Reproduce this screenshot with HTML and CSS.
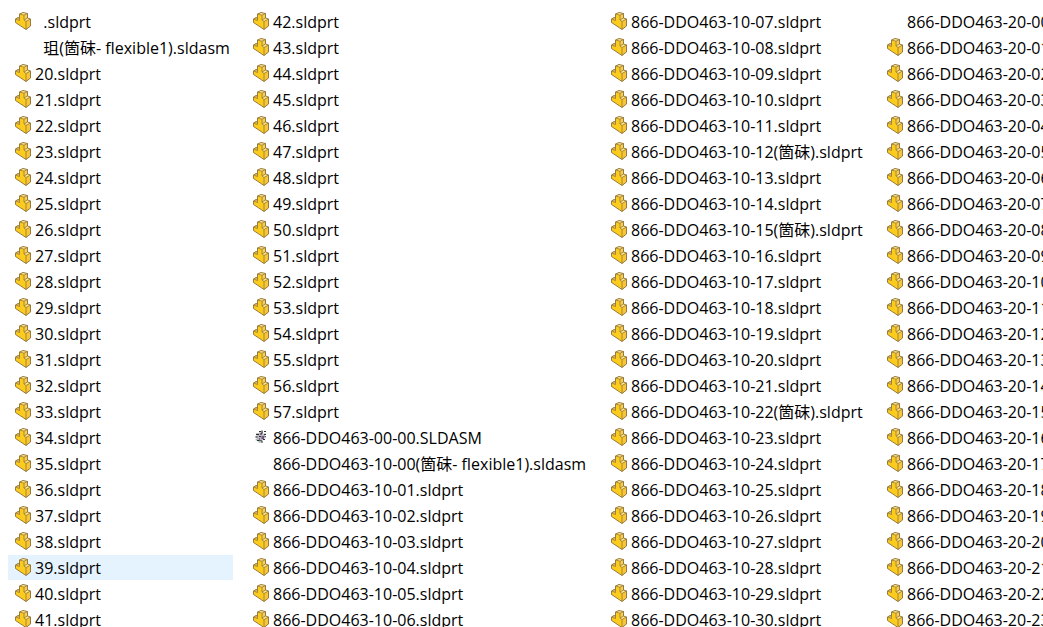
FILE: index.html
```html
<!DOCTYPE html>
<html lang="zh">
  <head>
    <meta charset="UTF-8" />
    <meta name="viewport" content="width=device-width, initial-scale=1.0" />
    <title>Files</title>
    <link rel="stylesheet" href="styles.css">
  </head>
  <body>
    <!-- icons shared by all rows -->
    <svg class="sprite" aria-hidden="true">
      <symbol id="part" viewBox="0 0 16 18">
        <path d="M.5 7 3 5.5 4.5 6V2L8 .5 12.5 1.5V6L15.5 7V14L11 17.5 .5 10.5Z" fill="#fbcb1e"/>
        <path d="M4.5 2 8 .5 12.5 1.5 9 3.2Z" fill="#ffe795"/>
        <path d="M9 3.2 12.5 1.5V6L9 8Z" fill="#f3cf58"/>
        <path d="M9 8 12.5 6 15.5 7 11 9.5Z" fill="#ffe795"/>
        <path d="M11 9.5 15.5 7V14L11 17.5Z" fill="#f5c63a"/>
        <path d="M.5 7 3 5.5 4.5 6V8L3.5 8.5Z" fill="#e3bf5a"/>
        <path d="M4.5 2 9 3.2 12.5 1.5M9 3.2V8L11 9.5 15.5 7M9 8 12.5 6M11 9.5V17.5M4.5 6V8.5L.5 7" fill="none" stroke="#9a7a30" stroke-width=".8"/>
        <path d="M.5 7 3 5.5 4.5 6V2L8 .5 12.5 1.5V6L15.5 7V14L11 17.5 .5 10.5Z" fill="none" stroke="#8c7038" stroke-width=".9" stroke-linejoin="round"/>
      </symbol>
      <symbol id="asm" viewBox="0 0 16 18">
        <path d="M3 5h3l1-2 1 2 2-2v3l3-1-1 3 1 2-3 1-1 3-3 1-1-2-3-1 2-2-2-1 2-2Z" fill="#b9b7bd"/>
        <path d="M6 3.5h2M9 2.5v3M11 3.5h2M3 6.5h3M7 6h2M11 6.5h2M2.5 9h2M6 8.5h2M6 11h1M4 12.5h2M8 14h2M10 11.5h2" fill="none" stroke="#303036" stroke-width="1.2"/>
        <path d="M8.5 8h2.5v3H8.5Z" fill="#73508c"/>
        <path d="M6 12.5h3M11.5 8.5h1.5" stroke="#47734e" fill="none"/>
      </symbol>
    </svg>

    <main class="files" id="files"></main>

    <script src="script.js"></script>
  </body>
</html>
```

FILE: styles.css
```css
body {
  margin: 0;
  background: #fff;
  color: #000;
  font-family: "Open Sans", "Noto Sans", "Noto Sans CJK SC", sans-serif;
  font-size: 16px;
  overflow: hidden;
}
.sprite {
  display: none;
}
.files {
  display: grid;
  grid-template-columns: 225px 345px 263px max-content;
  column-gap: 13px;
  padding: 9px 8px 0;
  height: 100vh;
  box-sizing: border-box;
  overflow: hidden;
}
.column {
  list-style: none;
  margin: 0;
  padding: 0;
}
.file {
  display: flex;
  align-items: center;
  gap: 4px;
  height: 25px;
  margin-bottom: 1px;
  padding: 0 7px;
}
.file.hover {
  background: #e5f3ff;
}
.icon {
  flex: none;
  width: 16px;
  height: 18px;
  margin-bottom: 1px;
}
.name {
  white-space: pre;
  line-height: 26px;
}
```

FILE: script.js
```javascript
const PREFIX = '866-DDO463-';
const HOVERED = '39.sldprt';

function range(from, to, makeName) {
  const names = [];
  for (let i = from; i <= to; i++) {
    names.push(makeName(String(i).padStart(2, '0')));
  }
  return names;
}

// these parts carry the configuration name
const configured = ['12', '15', '22'];
const partName = (n) =>
  PREFIX + '10-' + n + (configured.includes(n) ? '(箇砞)' : '') + '.sldprt';

const columns = [
  ['  .sldprt', '  珇(箇砞- flexible1).sldasm', ...range(20, 41, (n) => n + '.sldprt')],
  [
    ...range(42, 57, (n) => n + '.sldprt'),
    PREFIX + '00-00.SLDASM',
    PREFIX + '10-00(箇砞- flexible1).sldasm',
    ...range(1, 6, partName),
  ],
  range(7, 30, partName),
  [PREFIX + '20-00.sldasm', ...range(1, 23, (n) => PREFIX + '20-' + n + '.sldprt')],
];

function iconFor(name) {
  if (name.endsWith('.sldprt')) return '<use href="#part"/>';
  if (name.endsWith('.SLDASM')) return '<use href="#asm"/>';
  return ''; // no thumbnail yet
}

document.getElementById('files').innerHTML = columns
  .map((names) => '<ul class="column">' + names.map((name) =>
    `<li class="file${name === HOVERED ? ' hover' : ''}">` +
    `<svg class="icon" aria-hidden="true">${iconFor(name)}</svg>` +
    `<span class="name">${name}</span></li>`).join('') + '</ul>')
  .join('');
```
